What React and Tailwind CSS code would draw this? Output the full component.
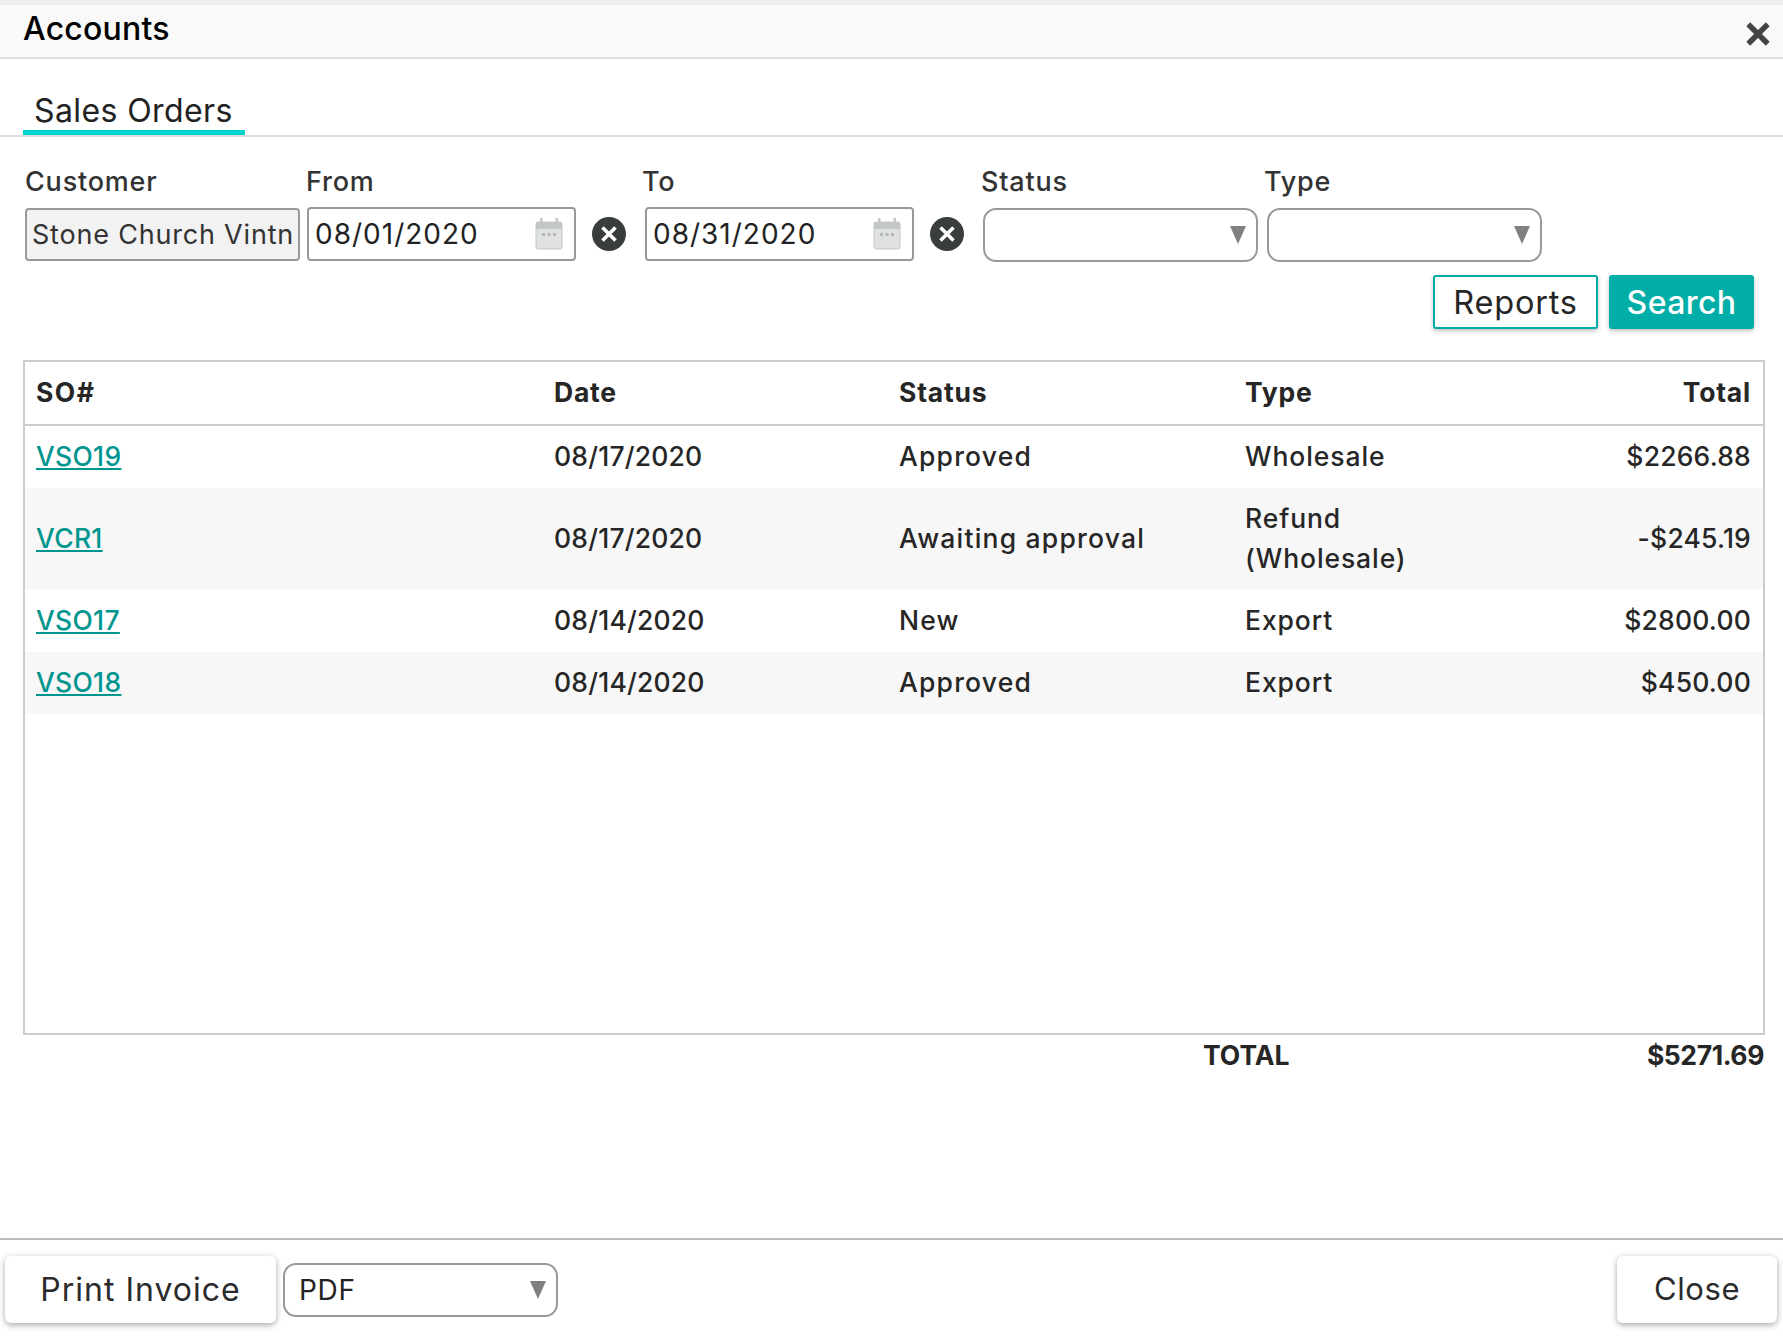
import React from 'react';

const rows = [
  { so: 'VSO19', date: '08/17/2020', status: 'Approved', type: ['Wholesale'], total: '$2266.88', h: 'h-[63px]' },
  { so: 'VCR1', date: '08/17/2020', status: 'Awaiting approval', type: ['Refund', '(Wholesale)'], total: '-$245.19', h: 'h-[101px]', alt: true },
  { so: 'VSO17', date: '08/14/2020', status: 'New', type: ['Export'], total: '$2800.00', h: 'h-[63px]' },
  { so: 'VSO18', date: '08/14/2020', status: 'Approved', type: ['Export'], total: '$450.00', h: 'h-[62px]', alt: true },
];

function CalendarIcon() {
  return (
    <svg viewBox="0 0 28 32" className="h-[32px] w-[28px]">
      <rect x="5" y="0" width="2.5" height="6" fill="#c4c7c7" />
      <rect x="20.5" y="0" width="2.5" height="6" fill="#c4c7c7" />
      <rect x="1" y="4" width="26" height="27" rx="2" fill="#e0e2e2" stroke="#c4c7c7" strokeWidth="1" />
      <rect x="1" y="4" width="26" height="7" fill="#c4c7c7" />
      <rect x="7" y="15" width="3" height="3" fill="#b5b8b8" />
      <rect x="12.5" y="15" width="3" height="3" fill="#b5b8b8" />
      <rect x="18" y="15" width="3" height="3" fill="#b5b8b8" />
    </svg>
  );
}

function ClearIcon() {
  return (
    <svg viewBox="0 0 34 34" className="-mt-[1px] h-[34px] w-[34px] shrink-0">
      <circle cx="17" cy="17" r="17" fill="#3a3d3e" />
      <path d="M10.5 10.5 L23.5 23.5 M23.5 10.5 L10.5 23.5" stroke="#ffffff" strokeWidth="3.6" />
    </svg>
  );
}

function Arrow() {
  return (
    <svg viewBox="0 0 16 18" className="h-[18px] w-[16px]">
      <path d="M0 0 H16 L8 18 Z" fill="#808080" />
    </svg>
  );
}

function SelectBox({ value, className }) {
  return (
    <div className={`flex h-[54px] items-center justify-between rounded-[13px] border-2 border-[#999999] bg-white pr-[10px] ${className}`}>
      <span className="pl-[14px] text-[28px] font-normal tracking-[0.7px] text-[#222222]">{value}</span>
      <Arrow />
    </div>
  );
}

function DateField({ value }) {
  return (
    <div className="flex h-[54px] w-[269px] items-center justify-between rounded-[4px] border-2 border-[#999999] bg-white pl-[6px] pr-[11px]">
      <span className="text-[28px] font-normal tracking-[1px] text-[#222222]">{value}</span>
      <CalendarIcon />
    </div>
  );
}

function FooterButton({ children, className }) {
  return (
    <button className={`h-[67px] rounded-[6px] bg-white text-[#2b2b2b] shadow-[0_2px_6px_rgba(0,0,0,0.35)] ${className}`}>
      {children}
    </button>
  );
}

export default function App() {
  return (
    <div className="flex h-[1341px] flex-col overflow-hidden bg-white font-['Inter',sans-serif] text-[#262626]">
      <div className="h-[5px] bg-[#eeeeee]" />

      {/* Header */}
      <div className="flex h-[54px] items-start justify-between border-b-2 border-[#dedede] bg-[#f9f9f9] pl-[23px] pr-[12px]">
        <h1 className="text-[32px] font-medium tracking-[0.2px] text-black">Accounts</h1>
        <svg viewBox="0 0 24 24" className="mt-[16px] h-[26px] w-[26px]">
          <path d="M3 3 L21 21 M21 3 L3 21" stroke="#444444" strokeWidth="5" />
        </svg>
      </div>

      {/* Tabs */}
      <div className="flex h-[78px] items-end border-b-2 border-[#dedede] pl-[23px]">
        <div className="w-[222px] border-b-[5px] border-[#00d4ce] pb-[1px] pl-[11px] text-[32px] leading-[36px] tracking-[0.4px] text-[#222222]">
          Sales Orders
        </div>
      </div>

      {/* Filters */}
      <div className="mt-[25px] flex pl-[25px] text-[27px] font-medium text-[#333333]">
        <div className="w-[281px]">
          <div className="h-[46px] tracking-[0.8px]">Customer</div>
          <input
            readOnly
            value="Stone Church Vintners"
            className="h-[53px] w-[275px] rounded-[4px] border-2 border-[#999999] bg-[#f2f2f2] pl-[5px] pr-[4px] text-[27px] font-normal tracking-[0.8px] text-[#333333]"
          />
        </div>
        <div className="w-[336px]">
          <div className="h-[46px] tracking-[0.8px]">From</div>
          <div className="-mt-[1px] flex items-center gap-[16px] pl-[1px]">
            <DateField value="08/01/2020" />
            <ClearIcon />
          </div>
        </div>
        <div className="w-[339px]">
          <div className="h-[46px] tracking-[0.8px]">To</div>
          <div className="-mt-[1px] flex items-center gap-[16px] pl-[3px]">
            <DateField value="08/31/2020" />
            <ClearIcon />
          </div>
        </div>
        <div className="w-[283px]">
          <div className="h-[46px] tracking-[0.8px]">Status</div>
          <SelectBox className="ml-[2px] w-[275px]" />
        </div>
        <div>
          <div className="h-[46px] tracking-[0.8px]">Type</div>
          <SelectBox className="ml-[3px] w-[275px]" />
        </div>
      </div>

      {/* Actions */}
      <div className="mt-[13px] flex justify-end gap-[11px] pr-[29px]">
        <button className="h-[54px] w-[165px] rounded-[3px] border-2 border-[#00aea7] bg-white pt-[2px] text-[32.5px] tracking-[0.8px] text-[#262626] shadow-[0_2px_4px_rgba(0,0,0,0.25)]">
          Reports
        </button>
        <button className="h-[54px] w-[145px] rounded-[3px] bg-[#00aea7] pt-[1px] text-[32px] font-medium tracking-[0.4px] text-white shadow-[0_2px_4px_rgba(0,0,0,0.25)]">
          Search
        </button>
      </div>

      {/* Orders table */}
      <div className="ml-[23px] mr-[18px] mt-[31px] h-[675px] border-2 border-[#cccccc]">
        <table className="w-full table-fixed border-collapse text-[26.5px] font-medium">
          <thead>
            <tr className="h-[63px] border-b-2 border-[#cccccc] text-left tracking-[0.8px]">
              <th className="w-[517px] pl-[11px] font-bold tracking-[1.5px]">SO#</th>
              <th className="w-[346px] pl-[12px] font-bold">Date</th>
              <th className="w-[346px] pl-[11px] font-bold">Status</th>
              <th className="w-[346px] pl-[11px] font-bold">Type</th>
              <th className="pr-[12px] text-right font-bold">Total</th>
            </tr>
          </thead>
          <tbody>
            {rows.map((r) => (
              <tr key={r.so} className={`${r.h} ${r.alt ? 'bg-[#f7f7f7]' : ''}`}>
                <td className="pl-[11px]">
                  <a href="#" className="tracking-[0.3px] text-[#00968f] underline">{r.so}</a>
                </td>
                <td className="pl-[12px] tracking-[0.2px]">{r.date}</td>
                <td className="pl-[11px] tracking-[1.2px]">{r.status}</td>
                <td className="pb-[2px] pl-[11px] leading-[40px] tracking-[0.9px]">
                  {r.type.map((t) => (
                    <div key={t}>{t}</div>
                  ))}
                </td>
                <td className="pr-[12px] text-right tracking-[0.2px]">{r.total}</td>
              </tr>
            ))}
          </tbody>
        </table>
      </div>

      {/* Grand total */}
      <div className="mt-[1px] flex justify-between pl-[1203px] pr-[19px] text-[26.5px] font-bold">
        <span>TOTAL</span>
        <span className="tracking-[-0.4px]">$5271.69</span>
      </div>

      {/* Footer */}
      <div className="mt-auto flex h-[103px] items-center justify-between border-t-2 border-[#bdbdbd] pb-[2px] pl-[5px] pr-[6px]">
        <div className="flex items-center gap-[7px]">
          <FooterButton className="w-[271px] text-[32px] tracking-[1px]">Print Invoice</FooterButton>
          <SelectBox value="PDF" className="w-[275px]" />
        </div>
        <FooterButton className="w-[160px] text-[31px] tracking-[0.6px]">Close</FooterButton>
      </div>
    </div>
  );
}
